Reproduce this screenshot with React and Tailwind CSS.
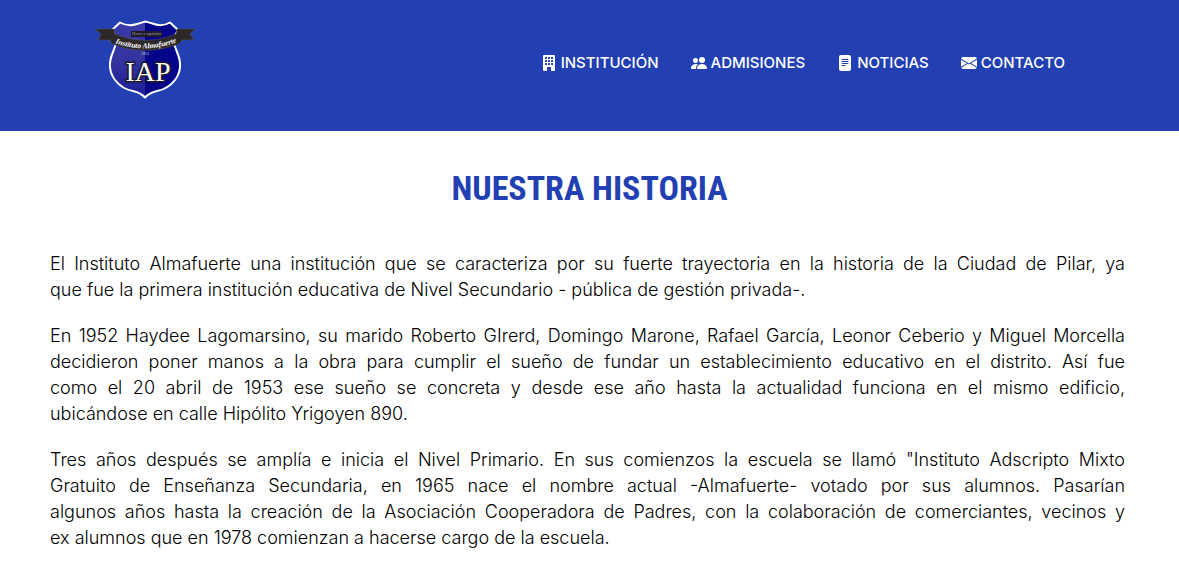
import { BsBuildingFill, BsPeopleFill, BsFileTextFill, BsEnvelopeFill } from "react-icons/bs";

const links = [
  { label: "INSTITUCIÓN", href: "#institucion", Icon: BsBuildingFill },
  { label: "ADMISIONES", href: "#admisiones", Icon: BsPeopleFill },
  { label: "NOTICIAS", href: "#noticias", Icon: BsFileTextFill },
  { label: "CONTACTO", href: "#contacto", Icon: BsEnvelopeFill },
];

const paragraphs = [
  "El Instituto Almafuerte una institución que se caracteriza por su fuerte trayectoria en la historia de la Ciudad de Pilar, ya que\u00a0fue\u00a0la\u00a0primera institución educativa de Nivel Secundario - pública de gestión privada-.",
  "En 1952 Haydee Lagomarsino, su marido Roberto GIrerd, Domingo Marone, Rafael García, Leonor Ceberio y Miguel Morcella decidieron poner manos a la obra para cumplir el sueño de fundar un establecimiento educativo en el distrito. Así fue como\u00a0el\u00a020\u00a0abril de 1953 ese sueño se concreta y desde ese año hasta la actualidad funciona en el mismo edificio, ubicándose\u00a0en\u00a0calle\u00a0Hipólito Yrigoyen 890.",
  'Tres años después se amplía e inicia el Nivel Primario. En sus comienzos la escuela se llamó "Instituto Adscripto Mixto Gratuito\u00a0de\u00a0Enseñanza Secundaria, en 1965 nace el nombre actual -Almafuerte- votado por sus alumnos. Pasarían algunos\u00a0años\u00a0hasta\u00a0la\u00a0creación de la Asociación Cooperadora de Padres, con la colaboración de comerciantes, vecinos y ex\u00a0alumnos\u00a0que\u00a0en\u00a01978 comienzan a hacerse cargo de la escuela.',
];

const shield =
  "M25 2.500Q33 7 42 4Q47 2.500 50.500 1.500Q54 2.500 59 4Q67 7 75 2.500L83 10Q76 20 82 32Q89 48 80 60Q73 69 62 71Q54 73 50 77.500Q46 73 38 71Q27 69 20 60Q11 48 18 32Q24 20 17 10Z";

function Logo() {
  return (
    <svg viewBox="0 0 100 86" className="h-[86px] w-[100px]" role="img" aria-label="Instituto Almafuerte">
      <defs>
        <clipPath id="shield-left">
          <rect x="0" y="0" width="50" height="86" />
        </clipPath>
        <linearGradient id="left-fill" x1="0" y1="0" x2="0" y2="1">
          <stop offset="0" stopColor="#3a3aa8" />
          <stop offset="0.5" stopColor="#3434a0" />
          <stop offset="1" stopColor="#1c1c98" />
        </linearGradient>
        <path id="ribbon-line" d="M17 22Q50 35 85 21" />
      </defs>
      <path d={shield} fill="#04048a" />
      <path d={shield} fill="url(#left-fill)" clipPath="url(#shield-left)" />
      <path d={shield} fill="none" stroke="#fff" strokeWidth="2" strokeLinejoin="round" />
      <rect x="36" y="11" width="31" height="6" fill="#1e1a2c" />
      <text x="51.500" y="15" fontSize="4" fontStyle="italic" textAnchor="middle" fill="#aaa" fontFamily="Liberation Serif, serif">
        Honor y sapientia
      </text>
      <path
        d="M0 9H19L20 14Q50 27 81 14L82 9H100L95 14L99 20H87L84 24Q50 37 17 24L15 20H3L6 14Z"
        fill="#2c2829"
        stroke="#555"
        strokeWidth="0.500"
      />
      <text fontSize="7.500" fontWeight="700" fontStyle="italic" textAnchor="middle" fill="#fff" fontFamily="Liberation Serif, serif">
        <textPath href="#ribbon-line" startOffset="50%">Instituto Almafuerte</textPath>
      </text>
      <text x="50" y="35" fontSize="4" textAnchor="middle" fill="#ddd" fontFamily="Liberation Serif, serif">
        1953
      </text>
      <text
        x="53"
        y="61"
        fontSize="28"
        textAnchor="middle"
        fill="#fff"
        stroke="#1c1a28"
        strokeWidth="3"
        paintOrder="stroke"
        fontFamily="Liberation Serif, serif"
      >
        IAP
      </text>
    </svg>
  );
}

export default function App() {
  return (
    <div className="min-h-screen bg-white font-['Inter','Liberation_Sans',sans-serif] text-black">
      <header className="flex items-center justify-between bg-[#2240b2] pt-5 pr-[114px] pb-[25px] pl-[95px]">
        <a href="#inicio">
          <Logo />
        </a>
        <nav className="flex gap-8">
          {links.map(({ label, href, Icon }) => (
            <a key={label} href={href} className="flex items-center gap-1 text-[15px] leading-6 font-medium text-white">
              <Icon aria-hidden="true" className="size-4" />
              {label}
            </a>
          ))}
        </nav>
      </header>
      <main className="px-[50px] pt-8 pb-4">
        <h1 className="mb-[38px] text-center font-['Roboto_Condensed','Liberation_Sans_Narrow',sans-serif] text-[34px] leading-[50px] font-bold text-[#2240b2]">
          NUESTRA HISTORIA
        </h1>
        <div className="flex flex-col gap-5 pr-1 text-justify text-lg leading-[26px] font-light">
          {paragraphs.map((text) => (
            <p key={text}>{text}</p>
          ))}
        </div>
      </main>
    </div>
  );
}
